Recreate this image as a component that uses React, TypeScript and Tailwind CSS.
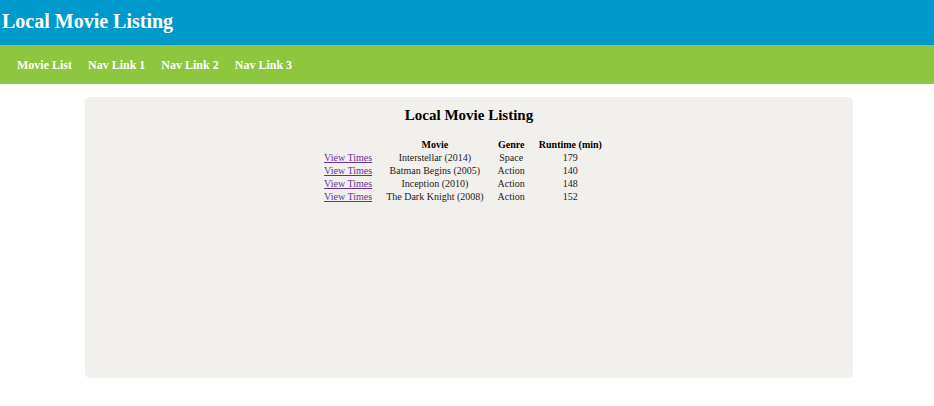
const movies = [
  { title: "Interstellar (2014)", genre: "Space", runtime: 179 },
  { title: "Batman Begins (2005)", genre: "Action", runtime: 140 },
  { title: "Inception (2010)", genre: "Action", runtime: 148 },
  { title: "The Dark Knight (2008)", genre: "Action", runtime: 152 },
];

const links = ["Movie List", "Nav Link 1", "Nav Link 2", "Nav Link 3"];

export default function App() {
  return (
    <div className="font-['Liberation_Serif','Times_New_Roman',serif] text-black">
      <header className="bg-[#0099cc] px-0.5 pt-[9px] pb-[11px]">
        <h1 className="text-[20px] leading-[25px] font-bold text-white">Local Movie Listing</h1>
      </header>
      <nav className="bg-[#8dc63f] px-[17px] pt-[11px] pb-[9px]">
        <ul className="flex gap-4">
          {links.map((link) => (
            <li key={link}>
              <a href="#" className="block text-[12px] leading-[19px] font-bold text-white">
                {link}
              </a>
            </li>
          ))}
        </ul>
      </nav>
      <div className="pt-[13px] pl-1">
        <main className="mx-auto min-h-[281px] w-[82.6%] rounded-[5px] bg-[#f2f0ec] pt-2 pb-4">
          <h2 className="text-center text-[15px] leading-5 font-bold">Local Movie Listing</h2>
          <div className="flex justify-center pt-[14px] pr-3">
            <table className="border-collapse text-center text-[10px] leading-[12px]">
              <thead>
                <tr>
                  <td />
                  <th className="px-[7px] pb-px">Movie</th>
                  <th className="px-[7px] pb-px">Genre</th>
                  <th className="px-[7px] pb-px">Runtime (min)</th>
                </tr>
              </thead>
              <tbody className="text-[#222222]">
                {movies.map((movie) => (
                  <tr key={movie.title}>
                    <td className="px-[7px] pb-px">
                      <a href="#" className="text-[#663394] underline">View Times</a>
                    </td>
                    <td className="px-[7px] pb-px">{movie.title}</td>
                    <td className="px-[7px] pb-px">{movie.genre}</td>
                    <td className="px-[7px] pb-px">{movie.runtime}</td>
                  </tr>
                ))}
              </tbody>
            </table>
          </div>
        </main>
      </div>
    </div>
  );
}
